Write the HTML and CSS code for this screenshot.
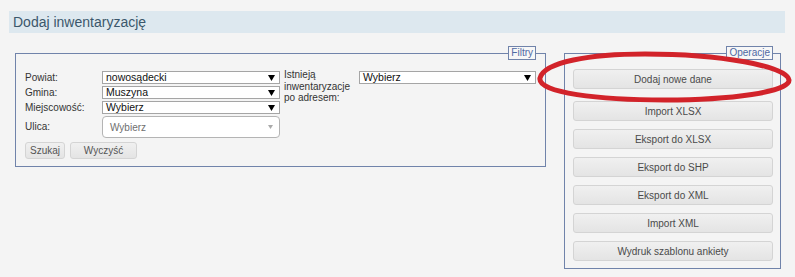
FILE: index.html
```html
<!DOCTYPE html>
<html lang="pl">
<head>
<meta charset="utf-8">
<title>Dodaj inwentaryzację</title>
<link rel="stylesheet" href="styles.css">
</head>
<body>
<div class="page">
  <div class="header"><h1 class="title">Dodaj inwentaryzację</h1></div>
  <div class="content">
    <fieldset class="box filters">
      <legend class="legend">Filtry</legend>
      <div class="filter-grid">
        <div class="lbl r1">Powiat:</div>
        <div class="sel c2 r1"><span class="sel-text">nowosądecki</span><svg class="arr" viewBox="0 0 7 6"><path d="M0 0H7L3.5 6Z"/></svg></div>
        <div class="lbl lbl-right">Istnieją<br>inwentaryzacje<br>po adresem:</div>
        <div class="sel c4 r1"><span class="sel-text">Wybierz</span><svg class="arr" viewBox="0 0 7 6"><path d="M0 0H7L3.5 6Z"/></svg></div>

        <div class="lbl r2">Gmina:</div>
        <div class="sel c2 r2"><span class="sel-text">Muszyna</span><svg class="arr" viewBox="0 0 7 6"><path d="M0 0H7L3.5 6Z"/></svg></div>

        <div class="lbl r3">Miejscowość:</div>
        <div class="sel c2 r3"><span class="sel-text">Wybierz</span><svg class="arr" viewBox="0 0 7 6"><path d="M0 0H7L3.5 6Z"/></svg></div>

        <div class="lbl r4">Ulica:</div>
        <div class="chosen c2 r4"><span class="chosen-text">Wybierz</span><svg class="arr-light" viewBox="0 0 5 4"><path d="M0 0H5L2.5 4Z"/></svg></div>

        <div class="actions">
          <button class="btn btn-small btn-search">Szukaj</button>
          <button class="btn btn-small btn-clear">Wyczyść</button>
        </div>
      </div>
    </fieldset>

    <fieldset class="box ops">
      <legend class="legend">Operacje</legend>
      <div class="ops-list">
        <button class="btn btn-op btn-first">Dodaj nowe dane</button>
        <button class="btn btn-op">Import XLSX</button>
        <button class="btn btn-op">Eksport do XLSX</button>
        <button class="btn btn-op">Eksport do SHP</button>
        <button class="btn btn-op">Eksport do XML</button>
        <button class="btn btn-op">Import XML</button>
        <button class="btn btn-op">Wydruk szablonu ankiety</button>
      </div>
    </fieldset>
  </div>
</div>
<svg class="annotation" viewBox="0 0 795 277" width="795" height="277">
  <path d="M540,78 C544,62 590,54 645,54 C720,54 787,66 789,80 C790,92 730,100 665,100 C600,100 537,93 540,78 Z" fill="none" stroke="#d2232a" stroke-width="5"/>
</svg>
</body>
</html>
```

FILE: styles.css
```css
html, body {
  margin: 0;
  padding: 0;
}
body {
  background: #f4f4f4;
  font-family: "Liberation Sans", Arial, sans-serif;
  width: 795px;
  height: 277px;
  overflow: hidden;
  position: relative;
}
.page {
  padding: 11px 10px 0 9px;
}
.header {
  height: 22px;
  background: #dde8ef;
  padding-left: 4px;
}
.title {
  margin: 0;
  font-size: 14px;
  font-weight: normal;
  line-height: 22px;
  color: #3b576b;
}
.content {
  display: flex;
  align-items: flex-start;
  margin: 13px 0 0 6px;
  gap: 18px;
}
.box {
  margin: 0;
  border: 1px solid #7083aa;
  min-width: 0;
  box-sizing: border-box;
}
.legend {
  margin-left: auto;
  margin-right: 0;
  padding: 0 2px;
  border: 1px solid #7083aa;
  background: #f7f7f7;
  color: #4f69a3;
  font-size: 10px;
  line-height: 12px;
}
.filters {
  width: 531px;
  padding: 11px 9px 7px 9px;
}
.filter-grid {
  display: grid;
  grid-template-columns: 77px 178px 79px 177px;
  grid-template-rows: 13px 13px 13px 22px auto;
  row-gap: 2px;
  align-items: center;
}
.r1 { grid-row: 1; }
.r2 { grid-row: 2; }
.r3 { grid-row: 3; }
.r4 { grid-row: 4; }
.c2 { grid-column: 2; }
.c4 { grid-column: 4; }
.lbl {
  grid-column: 1;
  font-size: 10px;
  color: #333;
  line-height: 11.5px;
}
.lbl-right {
  grid-column: 3;
  grid-row: 1 / 4;
  align-self: start;
  padding-left: 4px;
  margin-top: -2px;
}
.sel {
  height: 13px;
  box-sizing: border-box;
  border: 1px solid #a5a5a5;
  background: #fff;
  display: flex;
  align-items: center;
  justify-content: space-between;
  padding: 0 4px 0 3px;
}
.sel-text {
  font-size: 10.5px;
  line-height: 11px;
  color: #111;
}
.arr {
  width: 7px;
  height: 6px;
  fill: #000;
}
.chosen {
  height: 22px;
  box-sizing: border-box;
  border: 1px solid #b4b4b4;
  border-radius: 4px;
  background: #fff;
  display: flex;
  align-items: center;
  justify-content: space-between;
  padding: 0 6px 0 7px;
}
.chosen-text {
  font-size: 10px;
  color: #6f6f6f;
}
.arr-light {
  width: 5px;
  height: 4px;
  fill: #aaa;
}
.actions {
  grid-column: 1 / 3;
  grid-row: 5;
  display: flex;
  gap: 5px;
  margin-top: 2px;
}
.btn {
  font-family: "Liberation Sans", Arial, sans-serif;
  font-size: 10px;
  color: #555;
  background: linear-gradient(#f0f0f0, #e4e4e4);
  border: 1px solid #d4d4d4;
  border-radius: 3px;
  padding: 0;
  margin: 0;
  box-sizing: border-box;
}
.btn-small {
  height: 17px;
}
.btn-search {
  width: 40px;
}
.btn-clear {
  width: 67px;
}
.ops {
  width: 217px;
  padding: 9px 7px 7px 8px;
}
.ops-list {
  display: flex;
  flex-direction: column;
  gap: 8px;
}
.btn-op {
  height: 20px;
  width: 200px;
  color: #4a4a4a;
}
.btn-first {
  margin-bottom: 4px;
}
.annotation {
  position: absolute;
  left: 0;
  top: 0;
  pointer-events: none;
}
```
